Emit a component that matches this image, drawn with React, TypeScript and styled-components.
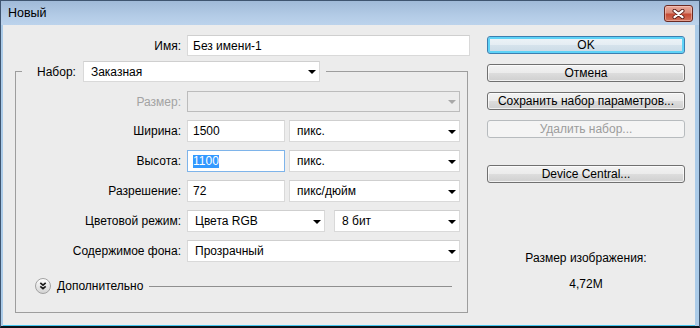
import React from 'react';
import styled, { createGlobalStyle, css } from 'styled-components';

const GlobalStyle = createGlobalStyle`
    html, body {
        margin: 0;
        padding: 0;
        background: #ececec;
    }
    body {
        font-family: 'Liberation Sans', Arial, sans-serif;
        font-size: 12px;
        color: #000;
    }
    * {
        box-sizing: border-box;
    }
`;

const Window = styled.div`
    width: 700px;
    height: 328px;
    display: flex;
    flex-direction: column;
    border: 1px solid #3f5570;
    border-bottom: 2px solid #0d1218;
    background: #abcbe8;
    padding: 0 4px 0 2px;
`;

const TitleBar = styled.div`
    height: 24px;
    margin: 0 -4px 0 -2px;
    padding: 0 6px 0 7px;
    display: flex;
    align-items: center;
    justify-content: space-between;
    background: linear-gradient(#a0bad8, #b3cbe6 60%, #bcd3ec);
    font-size: 12.5px;
`;

const CloseButton = styled.div`
    width: 29px;
    height: 17px;
    margin-top: 1px;
    border: 1px solid #6b2a22;
    border-radius: 3px;
    display: flex;
    align-items: center;
    justify-content: center;
    background: linear-gradient(#e9aa9c, #d98b79 45%, #c64b35 55%, #d2735c);
    box-shadow: inset 0 0 0 1px rgba(255, 220, 210, 0.45);
`;

const Client = styled.div`
    flex: 1;
    display: flex;
    padding-top: 10px;
    background: #ececec;
    border-bottom: 1px solid #45c6ef;
`;

const LeftColumn = styled.div`
    width: 467px;
    padding-left: 12px;
    display: flex;
    flex-direction: column;
`;

const RightColumn = styled.div`
    width: 198px;
    margin-left: 17px;
    padding-top: 1px;
    display: flex;
    flex-direction: column;
`;

const Row = styled.div<{ $h?: number; $labelWidth: number }>`
    display: grid;
    grid-template-columns: ${p => p.$labelWidth}px 1fr;
    column-gap: 6px;
    align-items: center;
    height: ${p => p.$h ?? 22}px;
`;

const Label = styled.div<{ $disabled?: boolean }>`
    text-align: right;
    white-space: nowrap;
    color: ${p => (p.$disabled ? '#a3a3a3' : '#000')};
`;

const Controls = styled.div`
    display: flex;
    height: 100%;
`;

const boxStyle = css`
    height: 100%;
    background: #fff;
    border: 1px solid #d9d9d9;
    border-top-color: #cfcfcf;
    display: flex;
    align-items: center;
    white-space: nowrap;
    overflow: hidden;
`;

const TextBox = styled.div<{ $w: number; $focused?: boolean }>`
    ${boxStyle};
    width: ${p => p.$w}px;
    padding-left: 5px;
    ${p =>
        p.$focused &&
        css`
            border-color: #7eb4ea;
        `}
`;

const Selection = styled.span`
    background: #3399ff;
    color: #fff;
    line-height: 13px;
`;

const Select = styled.div<{ $w: number; $disabled?: boolean }>`
    ${boxStyle};
    width: ${p => p.$w}px;
    padding: 0 3px 0 7px;
    justify-content: space-between;
    ${p =>
        p.$disabled &&
        css`
            background: #ececec;
            border-color: #bcbcbc;
        `}
`;

const Arrow = styled.span<{ $disabled?: boolean }>`
    width: 0;
    height: 0;
    margin-top: 1px;
    border-left: 4px solid transparent;
    border-right: 4px solid transparent;
    border-top: 4px solid ${p => (p.$disabled ? '#a8a8a8' : '#000')};
`;

const FieldSet = styled.fieldset`
    width: 453px;
    margin: 5px 0 0;
    padding: 0 15px 18px 0;
    border: 1px solid #9d9d9d;
    min-width: 0;
`;

const Legend = styled.legend`
    margin-left: 6px;
    padding: 0 6px 0 15px;
    height: 21px;
    display: flex;
    align-items: center;
    gap: 7px;
`;

const Rows = styled.div`
    padding: 9px 0 0 0;
    display: flex;
    flex-direction: column;
    gap: 8px;
`;

const MoreRow = styled.div`
    margin-top: 16px;
    height: 16px;
    padding-left: 19px;
    display: flex;
    align-items: center;
    gap: 6px;
`;

const MoreLine = styled.div`
    flex: 1;
    height: 1px;
    margin-top: 1px;
    background: #8f8f8f;
`;

const Button = styled.div<{ $variant?: 'default' | 'disabled' }>`
    height: 18px;
    border: 1px solid #707070;
    border-radius: 3px;
    display: flex;
    align-items: center;
    justify-content: center;
    background: linear-gradient(#f2f2f2, #ebebeb 50%, #dddddd 50%, #cfcfcf);
    box-shadow: inset 0 0 0 1px rgba(255, 255, 255, 0.7);
    ${p =>
        p.$variant === 'default' &&
        css`
            border-color: #3c7fb1;
            background: linear-gradient(#eef4f8, #e4edf3 50%, #d6e3ec 50%, #c9dae6);
            box-shadow: inset 0 0 0 2px #5fd3f7;
        `}
    ${p =>
        p.$variant === 'disabled' &&
        css`
            border-color: #b7bbbe;
            background: #f4f4f4;
            box-shadow: none;
            color: #9c9c9c;
        `}
`;

const ButtonStack = styled.div`
    display: flex;
    flex-direction: column;
    gap: 10px;
`;

const DeviceButton = styled(Button)`
    margin-top: 27px;
`;

const SizeInfo = styled.div`
    margin-top: 68px;
    display: flex;
    flex-direction: column;
    align-items: center;
    gap: 12px;
    line-height: 14px;
`;

const CloseGlyph = () => (
    <svg width="13" height="10" viewBox="0 0 13 10">
        <path d="M2.5 1.8 L10.5 8.2 M10.5 1.8 L2.5 8.2" stroke="#5a1d16" strokeWidth="4" strokeLinecap="round" />
        <path d="M2.5 1.8 L10.5 8.2 M10.5 1.8 L2.5 8.2" stroke="#fff" strokeWidth="2.2" strokeLinecap="round" />
    </svg>
);

const MoreIcon = () => (
    <svg width="16" height="16" viewBox="0 0 16 16">
        <defs>
            <linearGradient id="moreGrad" x1="0" y1="0" x2="0" y2="1">
                <stop offset="0" stopColor="#ffffff" />
                <stop offset="1" stopColor="#d2d2d2" />
            </linearGradient>
        </defs>
        <circle cx="8" cy="8" r="7.5" fill="url(#moreGrad)" stroke="#a2a2a2" />
        <path d="M5.3 4.8 L8 7.2 L10.7 4.8 M5.3 8.3 L8 10.7 L10.7 8.3" fill="none" stroke="#1a1a1a" strokeWidth="1.6" />
    </svg>
);

const LABEL_W = 165;

export default function App() {
    return (
        <>
            <GlobalStyle />
            <Window>
                <TitleBar>
                    <span>Новый</span>
                    <CloseButton>
                        <CloseGlyph />
                    </CloseButton>
                </TitleBar>
                <Client>
                    <LeftColumn>
                        <Row $labelWidth={166} $h={21}>
                            <Label>Имя:</Label>
                            <Controls>
                                <TextBox $w={283}>Без имени-1</TextBox>
                            </Controls>
                        </Row>
                        <FieldSet>
                            <Legend>
                                <span>Набор:</span>
                                <Select $w={237}>
                                    Заказная
                                    <Arrow />
                                </Select>
                            </Legend>
                            <Rows>
                                <Row $labelWidth={LABEL_W} $h={21}>
                                    <Label $disabled>Размер:</Label>
                                    <Controls>
                                        <Select $w={273} $disabled>
                                            <span />
                                            <Arrow $disabled />
                                        </Select>
                                    </Controls>
                                </Row>
                                <Row $labelWidth={LABEL_W}>
                                    <Label>Ширина:</Label>
                                    <Controls style={{ gap: 4 }}>
                                        <TextBox $w={98}>1500</TextBox>
                                        <Select $w={171}>
                                            пикс.
                                            <Arrow />
                                        </Select>
                                    </Controls>
                                </Row>
                                <Row $labelWidth={LABEL_W}>
                                    <Label>Высота:</Label>
                                    <Controls style={{ gap: 4 }}>
                                        <TextBox $w={98} $focused>
                                            <Selection>1100</Selection>
                                        </TextBox>
                                        <Select $w={171}>
                                            пикс.
                                            <Arrow />
                                        </Select>
                                    </Controls>
                                </Row>
                                <Row $labelWidth={LABEL_W}>
                                    <Label>Разрешение:</Label>
                                    <Controls style={{ gap: 4 }}>
                                        <TextBox $w={98}>72</TextBox>
                                        <Select $w={171}>
                                            пикс/дюйм
                                            <Arrow />
                                        </Select>
                                    </Controls>
                                </Row>
                                <Row $labelWidth={LABEL_W}>
                                    <Label>Цветовой режим:</Label>
                                    <Controls style={{ gap: 9 }}>
                                        <Select $w={138}>
                                            Цвета RGB
                                            <Arrow />
                                        </Select>
                                        <Select $w={126}>
                                            8 бит
                                            <Arrow />
                                        </Select>
                                    </Controls>
                                </Row>
                                <Row $labelWidth={LABEL_W}>
                                    <Label>Содержимое фона:</Label>
                                    <Controls>
                                        <Select $w={273}>
                                            Прозрачный
                                            <Arrow />
                                        </Select>
                                    </Controls>
                                </Row>
                            </Rows>
                            <MoreRow>
                                <MoreIcon />
                                <span>Дополнительно</span>
                                <MoreLine />
                            </MoreRow>
                        </FieldSet>
                    </LeftColumn>
                    <RightColumn>
                        <ButtonStack>
                            <Button $variant="default">OK</Button>
                            <Button>Отмена</Button>
                            <Button>Сохранить набор параметров...</Button>
                            <Button $variant="disabled">Удалить набор...</Button>
                        </ButtonStack>
                        <DeviceButton>Device Central...</DeviceButton>
                        <SizeInfo>
                            <span>Размер изображения:</span>
                            <span>4,72M</span>
                        </SizeInfo>
                    </RightColumn>
                </Client>
            </Window>
        </>
    );
}
